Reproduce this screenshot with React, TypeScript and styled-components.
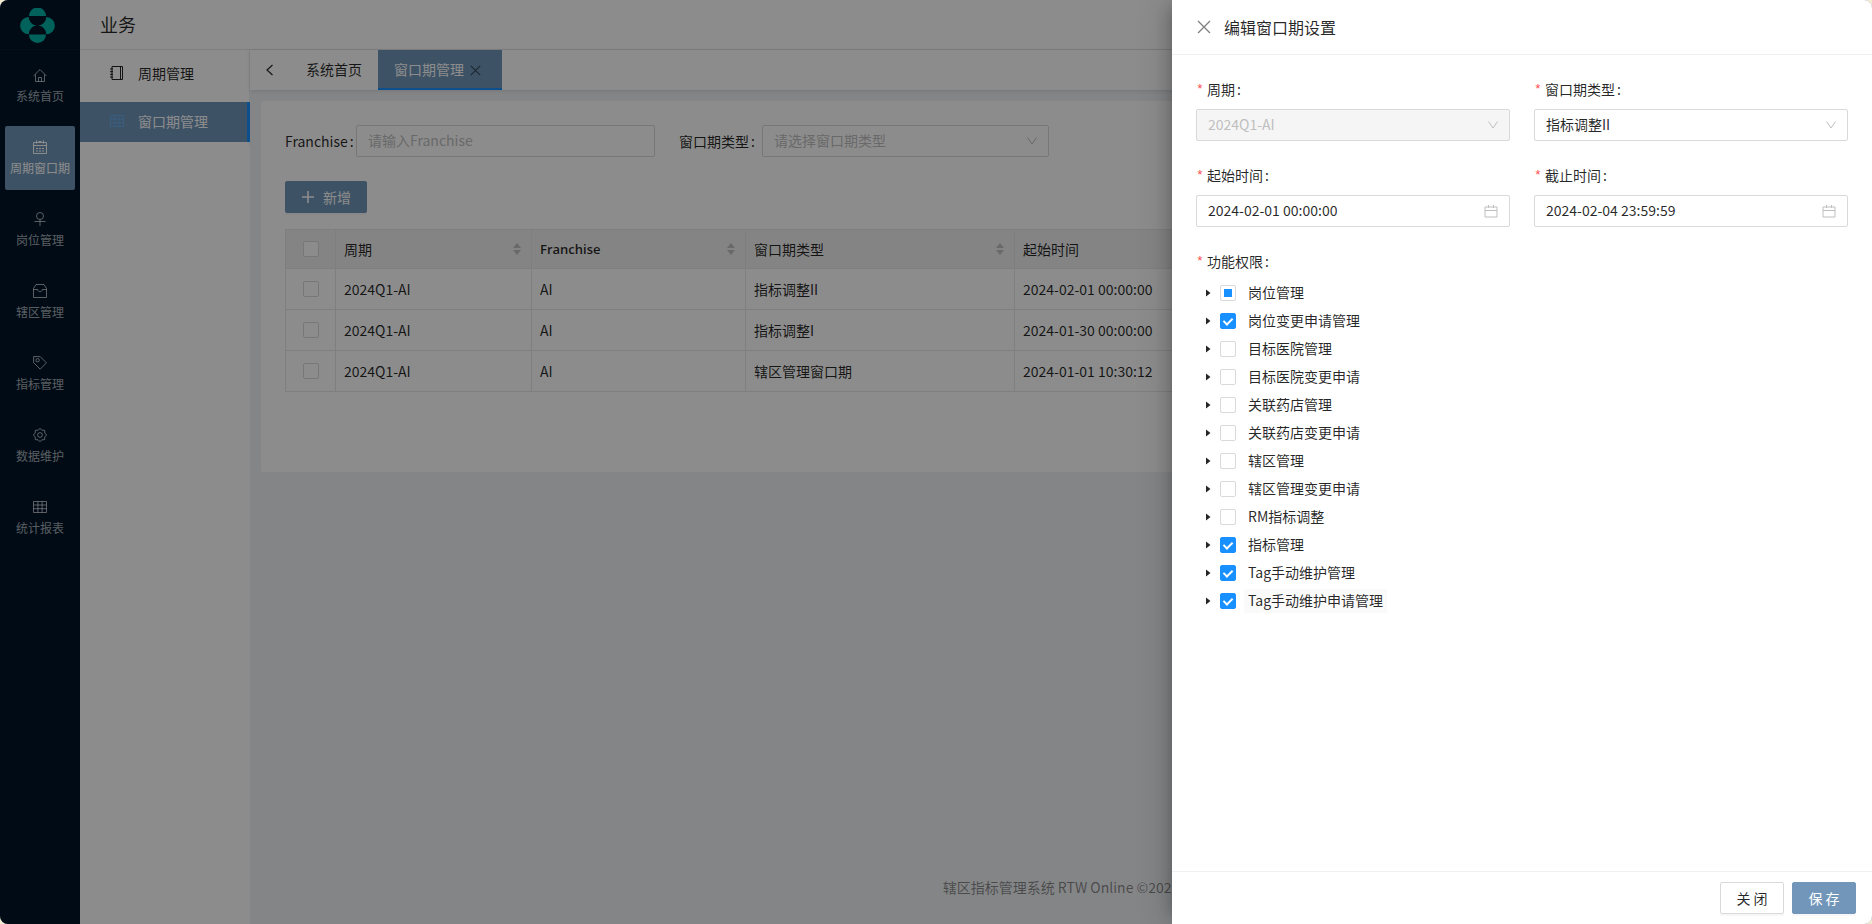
import React, { useEffect, useRef } from "react";
import styled, { createGlobalStyle, css } from "styled-components";

const color = {
  brand: "#7196b9",
  blue: "#1890ff",
  text: "rgba(0, 0, 0, 0.85)",
  hint: "#bfbfbf",
  border: "#d9d9d9",
  line: "#f0f0f0",
};

const GlobalStyle = createGlobalStyle`
  *, *::before, *::after { box-sizing: border-box; }
  body {
    margin: 0;
    background: #f3ead2;
    color: ${color.text};
    font: 14px/22px "Noto Sans CJK SC", "Open Sans", sans-serif;
  }
  button, input, select { font: inherit; color: inherit; margin: 0; }
  a { color: inherit; text-decoration: none; }
`;

/* ---------- icons ---------- */

const Svg = styled.svg`
  display: block;
  flex: none;
  fill: none;
  stroke: currentColor;
`;

const Icon = ({ size = 14, box = 14, children }: { size?: number; box?: number; children: React.ReactNode }) => (
  <Svg width={size} height={size} viewBox={`0 0 ${box} ${box}`} aria-hidden="true">
    {children}
  </Svg>
);

const HomeIcon = () => (
  <Icon>
    <path d="M0.6 7.9 7 1.5l6.4 6.4M2.5 6.4v7.1h9V6.4M5.5 13.5v-4h3v4" />
  </Icon>
);
const CalendarGridIcon = () => (
  <Icon>
    <path d="M0.5 2.5h13v11H0.5zM0.5 5.5h13M3.5 0.5v3M10.5 0.5v3M5.5 1.5h3" />
    <path d="M3 8.5h2M6 8.5h2M9 8.5h2M3 11h2M6 11h2M9 11h2" />
  </Icon>
);
const PersonIcon = () => (
  <Icon>
    <circle cx="7" cy="4" r="3.5" />
    <path d="M7 7.5V14M1.5 9.500h11" />
  </Icon>
);
const InboxIcon = () => (
  <Icon>
    <path d="M0.5 13.5V4.5L3 0.5h8l2.5 4v9zM0.5 5.5h4.2c.3 1.5 1.2 2.2 2.3 2.2s2-.7 2.3-2.2h4.2" />
  </Icon>
);
const TagIcon = () => (
  <Icon>
    <path d="M0.6 0.6h6.600l6.200 6.200-6.200 6.400-6.600-6.600z" />
    <circle cx="4.600" cy="4.200" r="1.700" />
  </Icon>
);

const gearTeeth = Array.from({ length: 16 }, (_, i) => {
  const angle = (i * Math.PI) / 8;
  const radius = i % 2 ? 5.2 : 6.6;
  return `${(7 + radius * Math.cos(angle)).toFixed(2)},${(7 + radius * Math.sin(angle)).toFixed(2)}`;
}).join(" ");

const GearIcon = () => (
  <Icon>
    <circle cx="7" cy="7" r="2.400" />
    <polygon points={gearTeeth} strokeLinejoin="round" />
  </Icon>
);
const TableIcon = () => (
  <Icon>
    <path d="M0.5 1.5h13v11H0.5zM0.5 5h13M0.5 8.7h13M4.9 1.5v11M9.100 1.5v11" />
  </Icon>
);
const NotebookIcon = () => (
  <Icon>
    <path d="M2 0.5h10.5v13H2zM10.5 0.5v13M0 3h3M0 5.700h3M0 8.300h3M0 11h3" />
  </Icon>
);
const ChevronLeft = () => (
  <Icon>
    <path d="M9.5 2 4 7l5.500 5" strokeWidth="1.2" />
  </Icon>
);
const ChevronDown = () => (
  <Icon size={12} box={12}>
    <path d="M1.5 2.5 6 9l4.5-6.5" />
  </Icon>
);
const CrossIcon = ({ size }: { size: number }) => (
  <Icon size={size}>
    <path d="M1 1l12 12M13 1 1 13" strokeWidth="1.3" />
  </Icon>
);
const PlusIcon = () => (
  <Icon>
    <path d="M7 1v12M1 7h12" strokeWidth="1.6" />
  </Icon>
);
const CalendarIcon = () => (
  <Icon>
    <path d="M1 3h12v10H1zM1 6.5h12M4.5 1v3M9.5 1v3" />
  </Icon>
);
const SorterIcon = () => (
  <Svg width="8" height="12" viewBox="0 0 8 12" aria-hidden="true">
    <path d="M4 0 8 5H0zM4 12 0 7h8z" fill="#bfbfbf" stroke="none" />
  </Svg>
);
const Logo = () => (
  <Svg width="35" height="35" viewBox="0 0 35 35" role="img" aria-label="logo">
    <g fill="#00b2a4" stroke="none">
      <path d="M9 8a8.500 8.500 0 0 1 17 0z" />
      <path d="M9 26.500a8.500 8.500 0 0 0 17 0z" />
      <path d="M8.700 9A8.600 8.600 0 0 0 8.700 26.200A8.700 8.700 0 0 1 16.600 17.600A8.700 8.700 0 0 1 8.700 9z" />
      <path d="M26.300 9A8.600 8.600 0 0 1 26.300 26.200A8.700 8.700 0 0 0 18.400 17.600A8.700 8.700 0 0 0 26.300 9z" />
    </g>
  </Svg>
);

/* ---------- shell ---------- */

const Shell = styled.div`
  position: relative;
  display: flex;
  min-height: 100vh;
  overflow: hidden;
  border-radius: 8px;
  background: #f0f2f5;
`;

const Rail = styled.aside`
  flex: none;
  width: 80px;
  background: #001529;
`;

const Brand = styled.div`
  display: flex;
  justify-content: center;
  height: 50px;
  padding: 8px 5px 0 0;
  border-bottom: 1px solid #051c30;
  margin-bottom: 4px;
`;

const RailNav = styled.nav`
  display: flex;
  flex-direction: column;
  gap: 8px;
  padding: 0 5px;
`;

const RailLink = styled.a<{ $active?: boolean }>`
  display: flex;
  flex-direction: column;
  align-items: center;
  gap: 4px;
  height: 64px;
  padding-top: 14px;
  border-radius: 2px;
  font-size: 12px;
  line-height: 20px;
  white-space: nowrap;
  color: ${(p) => (p.$active ? "#fff" : "rgba(255, 255, 255, 0.65)")};
  background: ${(p) => (p.$active ? color.brand : "transparent")};
`;

const Main = styled.div`
  display: flex;
  flex: 1;
  flex-direction: column;
  min-width: 0;
`;

const TopBar = styled.header`
  display: flex;
  align-items: center;
  height: 50px;
  padding: 0 20px 2px;
  border-bottom: 1px solid #e6e6e6;
  background: #fff;
  font-size: 18px;
`;

const Columns = styled.div`
  display: flex;
  flex: 1;
`;

const SideNav = styled.nav`
  flex: none;
  width: 170px;
  background: #fff;
`;

const SideList = styled.div`
  display: flex;
  flex-direction: column;
  gap: 8px;
  padding: 4px 0;
  border-right: 1px solid ${color.line};
`;

const SideLink = styled.a<{ $active?: boolean }>`
  display: flex;
  align-items: center;
  gap: 14px;
  height: 40px;
  padding: 0 0 2px 30px;
  ${(p) =>
    p.$active &&
    css`
      margin-right: -1px;
      border-right: 3px solid ${color.blue};
      background: ${color.brand};
      color: #fff;
      svg { color: #69a9e8; }
    `}
`;

const Content = styled.div`
  display: flex;
  flex: 1;
  flex-direction: column;
  min-width: 0;
`;

const TabBar = styled.div`
  display: flex;
  align-items: stretch;
  height: 40px;
  background: #fff;
  box-shadow: 0 1px 4px rgba(0, 21, 41, 0.12);
`;

const TabBack = styled.button`
  display: flex;
  align-items: center;
  justify-content: center;
  width: 40px;
  padding: 0;
  border: 0;
  background: none;
`;

const Tab = styled.div<{ $active?: boolean }>`
  display: flex;
  align-items: center;
  gap: 6px;
  padding: 0 16px 2px;
  ${(p) =>
    p.$active &&
    css`
      padding: 0 21px 0 16px;
      border-bottom: 2px solid ${color.blue};
      background: ${color.brand};
      color: #fff;
    `}
`;

const TabClose = styled.button`
  display: flex;
  padding: 2px 0 0;
  border: 0;
  background: none;
  color: rgba(0, 0, 0, 0.55);
`;

const Card = styled.section`
  display: flex;
  flex-direction: column;
  align-items: flex-start;
  margin: 11px;
  padding: 24px 24px 80px;
  border-radius: 2px;
  background: #fff;
`;

const PageFooter = styled.footer`
  margin-top: auto;
  padding: 24px 0 26px;
  text-align: center;
  color: rgba(0, 0, 0, 0.45);
`;

/* ---------- controls ---------- */

const Filters = styled.form`
  display: grid;
  grid-template-columns: repeat(4, 1fr);
  gap: 24px;
  width: 100%;
  margin-bottom: 24px;
`;

const FilterItem = styled.div<{ $label: number }>`
  display: grid;
  grid-template-columns: ${(p) => p.$label}px 1fr;
  align-items: center;
`;

const Label = styled.label`
  white-space: nowrap;
  &::after {
    content: ":";
    margin-left: 2px;
  }
`;

const Control = styled.div`
  position: relative;
  min-width: 0;
`;

const Suffix = styled.span<{ $right: number }>`
  position: absolute;
  top: 0;
  right: ${(p) => p.$right}px;
  display: flex;
  align-items: center;
  height: 32px;
  color: ${color.hint};
  pointer-events: none;
`;

const field = css`
  display: block;
  width: 100%;
  height: 32px;
  padding: 3px 11px 5px;
  border: 1px solid ${color.border};
  border-radius: 2px;
  outline: 0;
  background: #fff;
`;

const TextInput = styled.input`
  ${field}
  &::placeholder { color: ${color.hint}; opacity: 1; }
`;

const SelectBox = styled.select<{ $empty?: boolean }>`
  ${field}
  appearance: none;
  color: ${(p) => (p.$empty ? color.hint : "inherit")};
  &:disabled {
    background: #f5f5f5;
    color: ${color.hint};
    opacity: 1;
  }
`;

const Button = styled.button<{ $primary?: boolean }>`
  display: inline-flex;
  align-items: center;
  justify-content: center;
  gap: 8px;
  height: 32px;
  min-width: 64px;
  padding: 0 15px;
  border: 1px solid ${(p) => (p.$primary ? color.brand : color.border)};
  border-radius: 2px;
  background: ${(p) => (p.$primary ? color.brand : "#fff")};
  color: ${(p) => (p.$primary ? "#fff" : color.text)};
  box-shadow: 0 2px 0 rgba(0, 0, 0, 0.03);
`;

const Check = styled.input`
  position: relative;
  display: block;
  flex: none;
  appearance: none;
  width: 16px;
  height: 16px;
  border: 1px solid ${color.border};
  border-radius: 2px;
  background: #fff;
  &:checked {
    border-color: ${color.blue};
    background: ${color.blue};
  }
  &:checked::after {
    content: "";
    position: absolute;
    top: 2px;
    left: 4px;
    width: 6px;
    height: 9px;
    border: solid #fff;
    border-width: 0 2px 2px 0;
    transform: rotate(45deg);
  }
  &:indeterminate::after {
    content: "";
    position: absolute;
    top: 3px;
    left: 3px;
    width: 8px;
    height: 8px;
    background: ${color.blue};
  }
`;

/* ---------- table ---------- */

const DataTable = styled.table`
  width: 100%;
  margin-top: 16px;
  table-layout: fixed;
  border-spacing: 0;
  border: solid #e8e8e8;
  border-width: 1px 0 0 1px;
  th, td {
    height: 41px;
    padding: 0 8px;
    border: solid #e8e8e8;
    border-width: 0 1px 1px 0;
    text-align: left;
    font-weight: 400;
  }
  th {
    height: 39px;
    background: #f0f0f0;
  }
  input { margin: 0 auto; }
`;

const HeadCell = styled.div`
  display: flex;
  align-items: center;
  justify-content: space-between;
  padding-right: 2px;
`;

const Strong = styled.span`
  font-family: "Open Sans", sans-serif;
  font-weight: 600;
  font-size: 13px;
`;

/* ---------- drawer ---------- */

const Mask = styled.div`
  position: absolute;
  inset: 0;
  background: rgba(0, 0, 0, 0.45);
`;

const Drawer = styled.div`
  position: absolute;
  top: 0;
  right: 0;
  bottom: 0;
  display: flex;
  flex-direction: column;
  width: 700px;
  max-width: 100%;
  background: #fff;
  box-shadow: -6px 0 16px -8px rgba(0, 0, 0, 0.32), -9px 0 28px rgba(0, 0, 0, 0.12);
`;

const DrawerHead = styled.header`
  display: flex;
  align-items: center;
  gap: 13px;
  height: 55px;
  padding: 0 25px;
  border-bottom: 1px solid ${color.line};
`;

const DrawerTitle = styled.h2`
  margin: 0;
  font-size: 16px;
  font-weight: 400;
`;

const DrawerClose = styled.button`
  display: flex;
  padding: 0;
  border: 0;
  background: none;
  color: rgba(0, 0, 0, 0.5);
`;

const DrawerForm = styled.form`
  display: grid;
  flex: 1;
  grid-template-columns: 1fr 1fr;
  align-content: start;
  gap: 24px;
  padding: 24px;
`;

const FormItem = styled.div<{ $wide?: boolean }>`
  display: flex;
  flex-direction: column;
  gap: 10px;
  ${(p) => p.$wide && "grid-column: 1 / -1;"}
`;

const required = css`
  display: flex;
  height: 20px;
  line-height: 20px;
  &::before {
    content: "*";
    width: 7px;
    margin-right: 4px;
    color: #ff4d4f;
    font-family: "Liberation Mono", monospace;
    font-size: 13px;
    line-height: 22px;
  }
  &::after {
    content: ":";
    margin-left: 2px;
  }
`;

const RequiredLabel = styled.label`
  ${required}
`;

const GroupLabel = styled.div`
  ${required}
`;

const FieldCell = styled.div`
  position: relative;
`;

const Tree = styled.ul`
  display: flex;
  flex-direction: column;
  gap: 4px;
  margin: 0;
  padding: 0;
  list-style: none;
`;

const TreeRow = styled.li`
  display: flex;
  align-items: center;
  height: 24px;
`;

const TreeToggle = styled.button`
  display: flex;
  align-items: center;
  justify-content: center;
  width: 24px;
  height: 24px;
  padding: 0;
  border: 0;
  background: none;
`;

const TreeLabel = styled.label<{ $hover?: boolean }>`
  height: 24px;
  margin-left: 8px;
  padding: 0 4px;
  line-height: 22px;
  border-radius: 2px;
  background: ${(p) => (p.$hover ? "#fafafa" : "transparent")};
`;

const DrawerFoot = styled.footer`
  display: flex;
  justify-content: flex-end;
  gap: 8px;
  padding: 10px 16px;
  border-top: 1px solid ${color.line};
`;

/* ---------- data ---------- */

const railItems = [
  { label: "系统首页", icon: <HomeIcon /> },
  { label: "周期窗口期", icon: <CalendarGridIcon />, active: true },
  { label: "岗位管理", icon: <PersonIcon /> },
  { label: "辖区管理", icon: <InboxIcon /> },
  { label: "指标管理", icon: <TagIcon /> },
  { label: "数据维护", icon: <GearIcon /> },
  { label: "统计报表", icon: <TableIcon /> },
];

const rows = [
  ["2024Q1-AI", "AI", "指标调整II", "2024-02-01 00:00:00"],
  ["2024Q1-AI", "AI", "指标调整I", "2024-01-30 00:00:00"],
  ["2024Q1-AI", "AI", "辖区管理窗口期", "2024-01-01 10:30:12"],
];

type State = "on" | "off" | "some";
const permissions: [string, State][] = [
  ["岗位管理", "some"],
  ["岗位变更申请管理", "on"],
  ["目标医院管理", "off"],
  ["目标医院变更申请", "off"],
  ["关联药店管理", "off"],
  ["关联药店变更申请", "off"],
  ["辖区管理", "off"],
  ["辖区管理变更申请", "off"],
  ["RM指标调整", "off"],
  ["指标管理", "on"],
  ["Tag手动维护管理", "on"],
  ["Tag手动维护申请管理", "on"],
];

/* ---------- parts ---------- */

const Permission = ({ id, label, state, hover }: { id: string; label: string; state: State; hover: boolean }) => {
  const ref = useRef<HTMLInputElement>(null);
  useEffect(() => {
    if (ref.current) ref.current.indeterminate = state === "some";
  }, [state]);
  return (
    <TreeRow>
      <TreeToggle type="button" aria-label={`展开${label}`}>
        <Svg width="5" height="8" viewBox="0 0 5 8" aria-hidden="true">
          <path d="M0 0.5 4.500 4 0 7.500z" fill="currentColor" stroke="none" />
        </Svg>
      </TreeToggle>
      <Check ref={ref} type="checkbox" id={id} defaultChecked={state === "on"} />
      <TreeLabel htmlFor={id} $hover={hover}>
        {label}
      </TreeLabel>
    </TreeRow>
  );
};

const DateField = ({ id, label, value }: { id: string; label: string; value: string }) => (
  <FormItem>
    <RequiredLabel htmlFor={id}>{label}</RequiredLabel>
    <FieldCell>
      <TextInput id={id} defaultValue={value} />
      <Suffix $right={12}>
        <CalendarIcon />
      </Suffix>
    </FieldCell>
  </FormItem>
);

const SelectField = ({ id, label, value, disabled }: { id: string; label: string; value: string; disabled?: boolean }) => (
  <FormItem>
    <RequiredLabel htmlFor={id}>{label}</RequiredLabel>
    <FieldCell>
      <SelectBox id={id} disabled={disabled}>
        <option>{value}</option>
      </SelectBox>
      <Suffix $right={11}>
        <ChevronDown />
      </Suffix>
    </FieldCell>
  </FormItem>
);

export default function App() {
  return (
    <>
      <GlobalStyle />
      <Shell>
        <Rail>
          <Brand>
            <Logo />
          </Brand>
          <RailNav>
            {railItems.map((item) => (
              <RailLink key={item.label} href="#" $active={item.active}>
                {item.icon}
                {item.label}
              </RailLink>
            ))}
          </RailNav>
        </Rail>

        <Main>
          <TopBar>业务</TopBar>
          <Columns>
            <SideNav>
              <SideList>
                <SideLink href="#">
                  <NotebookIcon />
                  周期管理
                </SideLink>
                <SideLink href="#" $active>
                  <TableIcon />
                  窗口期管理
                </SideLink>
              </SideList>
            </SideNav>

            <Content>
              <TabBar>
                <TabBack type="button" aria-label="向左">
                  <ChevronLeft />
                </TabBack>
                <Tab>
                  <a href="#">系统首页</a>
                </Tab>
                <Tab $active>
                  <a href="#">窗口期管理</a>
                  <TabClose type="button" aria-label="关闭标签">
                    <CrossIcon size={11} />
                  </TabClose>
                </Tab>
              </TabBar>

              <Card>
                <Filters>
                  <FilterItem $label={71}>
                    <Label htmlFor="f-franchise">Franchise</Label>
                    <Control>
                      <TextInput id="f-franchise" placeholder="请输入Franchise" />
                    </Control>
                  </FilterItem>
                  <FilterItem $label={83}>
                    <Label htmlFor="f-type">窗口期类型</Label>
                    <Control>
                      <SelectBox id="f-type" $empty>
                        <option>请选择窗口期类型</option>
                      </SelectBox>
                      <Suffix $right={11}>
                        <ChevronDown />
                      </Suffix>
                    </Control>
                  </FilterItem>
                </Filters>

                <Button type="button" $primary>
                  <PlusIcon />
                  新增
                </Button>

                <DataTable>
                  <colgroup>
                    <col style={{ width: 50 }} />
                    <col style={{ width: 196 }} />
                    <col style={{ width: 214 }} />
                    <col style={{ width: 269 }} />
                    <col />
                  </colgroup>
                  <thead>
                    <tr>
                      <th>
                        <Check type="checkbox" aria-label="全选" />
                      </th>
                      <th>
                        <HeadCell>
                          周期
                          <SorterIcon />
                        </HeadCell>
                      </th>
                      <th>
                        <HeadCell>
                          <Strong>Franchise</Strong>
                          <SorterIcon />
                        </HeadCell>
                      </th>
                      <th>
                        <HeadCell>
                          窗口期类型
                          <SorterIcon />
                        </HeadCell>
                      </th>
                      <th>起始时间</th>
                    </tr>
                  </thead>
                  <tbody>
                    {rows.map((row) => (
                      <tr key={row[3]}>
                        <td>
                          <Check type="checkbox" aria-label={`选择 ${row[2]}`} />
                        </td>
                        {row.map((cell) => (
                          <td key={cell}>{cell}</td>
                        ))}
                      </tr>
                    ))}
                  </tbody>
                </DataTable>
              </Card>

              <PageFooter>辖区指标管理系统 RTW Online ©2023</PageFooter>
            </Content>
          </Columns>
        </Main>

        <Mask />

        <Drawer role="dialog" aria-labelledby="drawer-title">
          <DrawerHead>
            <DrawerClose type="button" aria-label="关闭">
              <CrossIcon size={14} />
            </DrawerClose>
            <DrawerTitle id="drawer-title">编辑窗口期设置</DrawerTitle>
          </DrawerHead>
          <DrawerForm>
            <SelectField id="d-cycle" label="周期" value="2024Q1-AI" disabled />
            <SelectField id="d-type" label="窗口期类型" value="指标调整II" />
            <DateField id="d-start" label="起始时间" value="2024-02-01 00:00:00" />
            <DateField id="d-end" label="截止时间" value="2024-02-04 23:59:59" />
            <FormItem $wide>
              <GroupLabel>功能权限</GroupLabel>
              <Tree>
                {permissions.map(([label, state], i) => (
                  <Permission
                    key={label}
                    id={`perm-${i}`}
                    label={label}
                    state={state}
                    hover={i === permissions.length - 1}
                  />
                ))}
              </Tree>
            </FormItem>
          </DrawerForm>
          <DrawerFoot>
            <Button type="button">关 闭</Button>
            <Button type="button" $primary>
              保 存
            </Button>
          </DrawerFoot>
        </Drawer>
      </Shell>
    </>
  );
}
